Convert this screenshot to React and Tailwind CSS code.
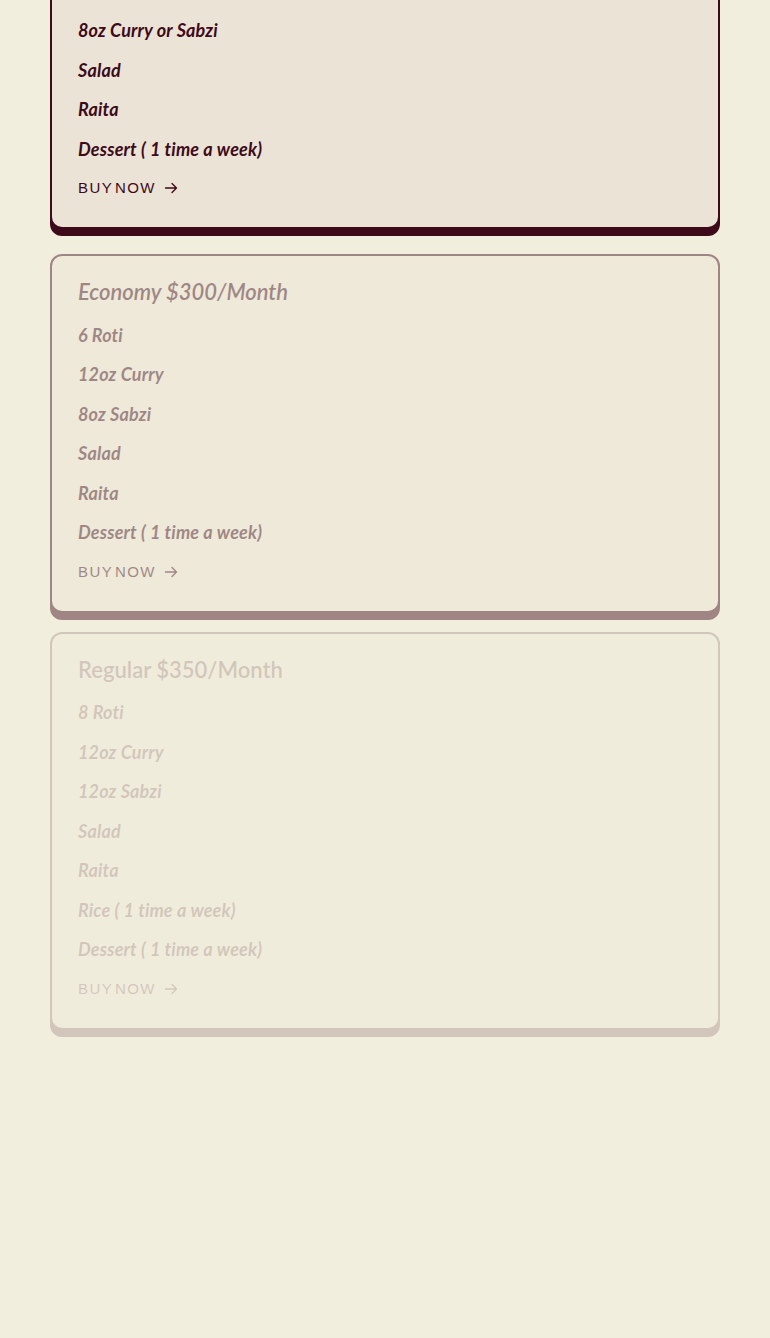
import React from "react";

const Arrow = () => (
  <svg width="14" height="12" viewBox="0 0 14 12" fill="none" stroke="currentColor" strokeWidth="1.3" strokeLinecap="round" strokeLinejoin="round" className="ml-[8px]">
    <path d="M1.5 6h11M8 1.5L12.5 6 8 10.5" />
  </svg>
);

function Card({ title, items, italicTitle, className }) {
  return (
    <div className={"rounded-[12px] border-2 border-[#3d0a1a] bg-[#ebe3d5] pl-[26px] pr-[26px] pt-[21px] pb-[27px] text-[#3d0a1a] shadow-[0_7px_0_#3d0a1a] " + className}>
      <div className="flex flex-col gap-[15.5px]">
        <div className={"text-[22px] leading-[30px] font-semibold " + (italicTitle ? "italic" : "")} style={{ fontFamily: "Lato, 'Open Sans', sans-serif" }}>
          {title}
        </div>
        {items.map((it, i) => (
          <div key={i} className="text-[18px] leading-[24px] font-bold italic tracking-[0.15px]" style={{ fontFamily: "Lato, 'Open Sans', sans-serif" }}>
            {it}
          </div>
        ))}
        <div className="flex items-center text-[15px] leading-[24px] tracking-[1.4px]" style={{ fontFamily: "'Liberation Sans', Arial, sans-serif" }}>
          BUY<span className="ml-[2px]">NOW</span>
          <Arrow />
        </div>
      </div>
    </div>
  );
}

export default function App() {
  return (
    <div className="min-h-[1338px] w-full overflow-hidden bg-[#f2eedd]">
      <div className="mx-[50px] flex flex-col">
        <Card
          className="mt-[-90px]"
          italicTitle
          title="Basic $250/Month"
          items={["5 Roti", "8oz Curry or Sabzi", "Salad", "Raita", "Dessert ( 1 time a week)"]}
        />
        <Card
          className="mt-[25px] opacity-45"
          italicTitle
          title="Economy $300/Month"
          items={["6 Roti", "12oz Curry", "8oz Sabzi", "Salad", "Raita", "Dessert ( 1 time a week)"]}
        />
        <Card
          className="mt-[19px] opacity-[0.17]"
          title="Regular $350/Month"
          items={["8 Roti", "12oz Curry", "12oz Sabzi", "Salad", "Raita", "Rice ( 1 time a week)", "Dessert ( 1 time a week)"]}
        />
      </div>
    </div>
  );
}
